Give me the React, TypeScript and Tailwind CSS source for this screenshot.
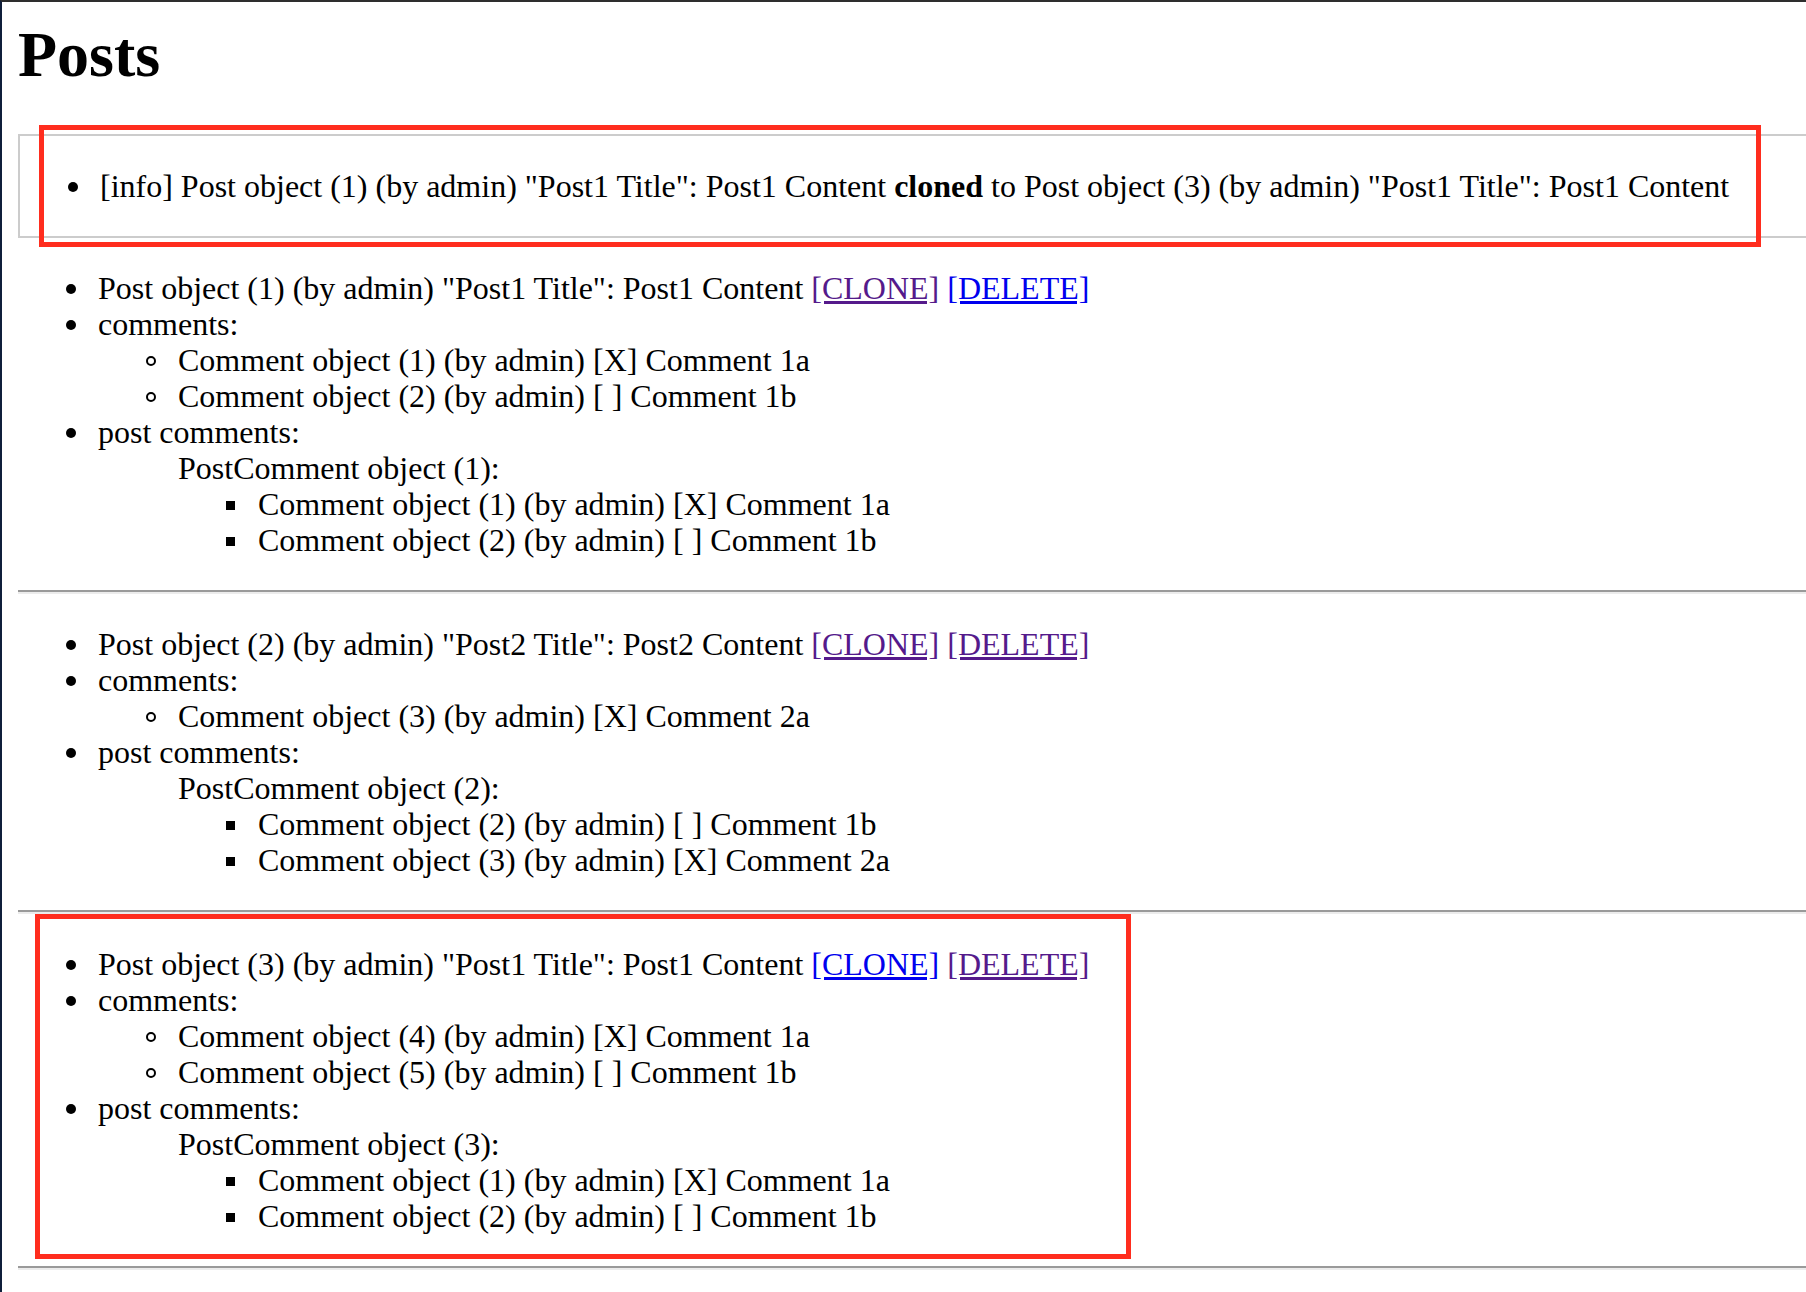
import React from "react";

type Link = "v" | "u";

const linkCls = (k: Link) =>
  k === "v" ? "text-[#551a8b] underline" : "text-[#0000ee] underline";

function Disc() {
  return <span className="inline-block w-[10px] h-[10px] rounded-full bg-black align-[5px] -ml-[32px] mr-[22px]" />;
}
function Circle() {
  return (
    <span className="inline-block w-[10px] h-[10px] rounded-full border-2 border-black align-[5px] -ml-[32px] mr-[22px]" />
  );
}
function Square() {
  return <span className="inline-block w-[9px] h-[9px] bg-black align-[5px] -ml-[32px] mr-[23px]" />;
}

function Post({
  id,
  title,
  content,
  clone,
  del,
  comments,
  pcId,
  pcComments,
}: {
  id: number;
  title: string;
  content: string;
  clone: Link;
  del: Link;
  comments: string[];
  pcId: number;
  pcComments: string[];
}) {
  return (
    <ul className="list-none pl-[80px] my-[32px]">
      <li>
        <Disc />
        Post object ({id}) (by admin) "{title}": {content}{" "}
        <a href="#" className={linkCls(clone)}>
          [CLONE]
        </a>{" "}
        <a href="#" className={linkCls(del)}>
          [DELETE]
        </a>
      </li>
      <li>
        <Disc />
        comments:
        <ul className="list-none pl-[80px]">
          {comments.map((c, i) => (
            <li key={i}>
              <Circle />
              {c}
            </li>
          ))}
        </ul>
      </li>
      <li>
        <Disc />
        post comments:
        <ul className="list-none pl-[80px]">
          PostComment object ({pcId}):
          <ul className="list-none pl-[80px]">
            {pcComments.map((c, i) => (
              <li key={i}>
                <Square />
                {c}
              </li>
            ))}
          </ul>
        </ul>
      </li>
    </ul>
  );
}

function Rule() {
  return <div className="h-0 border-t-2 border-b-2 border-t-[#9a9a9a] border-b-[#ececec]" />;
}

export default function App() {
  return (
    <div
      className="relative h-[1292px] overflow-hidden bg-white text-black border-t-2 border-l-2 border-t-[#2e2e2e] border-l-[#0f1e3a] text-[32px] leading-[36px]"
      style={{ fontFamily: '"Liberation Serif", "Times New Roman", serif' }}
    >
      <div className="pl-[16px]">
        <h1 className="text-[64px] font-bold leading-[74px] mt-[16px] mb-[42px]">Posts</h1>
        <div className="border-2 border-r-0 border-[#cccccc]">
          <ul className="list-none pl-[80px] my-[32px]">
            <li>
              <Disc />
              [info] Post object (1) (by admin) "Post1 Title": Post1 Content <b>cloned</b> to Post object (3)
              (by admin) "Post1 Title": Post1 Content
            </li>
          </ul>
        </div>
        <Post
          id={1}
          title="Post1 Title"
          content="Post1 Content"
          clone="v"
          del="u"
          comments={[
            "Comment object (1) (by admin) [X] Comment 1a",
            "Comment object (2) (by admin) [ ] Comment 1b",
          ]}
          pcId={1}
          pcComments={[
            "Comment object (1) (by admin) [X] Comment 1a",
            "Comment object (2) (by admin) [ ] Comment 1b",
          ]}
        />
        <Rule />
        <Post
          id={2}
          title="Post2 Title"
          content="Post2 Content"
          clone="v"
          del="v"
          comments={["Comment object (3) (by admin) [X] Comment 2a"]}
          pcId={2}
          pcComments={[
            "Comment object (2) (by admin) [ ] Comment 1b",
            "Comment object (3) (by admin) [X] Comment 2a",
          ]}
        />
        <Rule />
        <Post
          id={3}
          title="Post1 Title"
          content="Post1 Content"
          clone="u"
          del="v"
          comments={[
            "Comment object (4) (by admin) [X] Comment 1a",
            "Comment object (5) (by admin) [ ] Comment 1b",
          ]}
          pcId={3}
          pcComments={[
            "Comment object (1) (by admin) [X] Comment 1a",
            "Comment object (2) (by admin) [ ] Comment 1b",
          ]}
        />
        <Rule />
      </div>
      <div className="absolute left-[37px] top-[123px] w-[1722px] h-[122px] border-[5px] border-[#ff2d1e] pointer-events-none" />
      <div className="absolute left-[33px] top-[912px] w-[1096px] h-[345px] border-[5px] border-[#ff2d1e] pointer-events-none" />
    </div>
  );
}
